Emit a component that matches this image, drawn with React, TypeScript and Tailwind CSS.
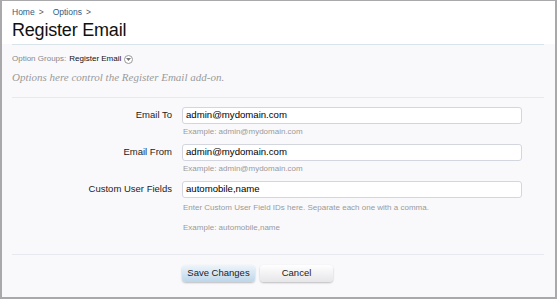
import React from "react";

const sans = { fontFamily: '"Liberation Sans", Arial, sans-serif' };

function Row({ label, value, children }: { label: string; value: string; children?: React.ReactNode }) {
  return (
    <div className="flex">
      <div className="w-[170px] shrink-0 h-[17px] flex items-center justify-end text-[9.5px] text-[#222]">{label}</div>
      <div className="ml-[10px] w-[340px]">
        <div className="h-[17px] bg-white border border-[#d3d6de] rounded-[3px] flex items-center pl-[3px] text-[9.6px] text-black">
          {value}
        </div>
        {children}
      </div>
    </div>
  );
}

export default function App() {
  return (
    <div className="w-[558px] h-[300px] bg-white" style={sans}>
      <div className="w-[557px] h-[299px] border-t border-r-2 border-b-2 border-l-2 border-[#a9a9ab] bg-[#f9f9fc] flex flex-col">
        <div className="bg-white h-[43px] px-[10px] flex flex-col">
          <div className="pt-[6px] h-[16px] flex items-center text-[8.5px] text-[#2d5d85]">
            <span>Home</span>
            <span className="ml-[4px] text-[#555]">&gt;</span>
            <span className="ml-[9px]">Options</span>
            <span className="ml-[4px] text-[#555]">&gt;</span>
          </div>
          <div className="text-[18px] leading-[22px] text-[#111] tracking-[-0.2px] mt-[2px]">Register Email</div>
        </div>
        <div className="mx-[10px] mr-[11px] h-[1px] bg-[#d8e4ea]" />
        <div className="px-[10px]">
          <div className="mt-[8px] h-[12px] flex items-center text-[8px]">
            <span className="text-[#888]">Option Groups:</span>
            <span className="ml-[3px] text-[#111]">Register Email</span>
            <span className="ml-[3px] w-[9px] h-[9px] rounded-full border border-[#999] bg-white flex items-center justify-center">
              <svg width="5" height="3" viewBox="0 0 5 3"><path d="M0 0 L5 0 L2.5 3 Z" fill="#777" /></svg>
            </span>
          </div>
          <div
            className="mt-[5px] h-[14px] flex items-center text-[11px] italic text-[#9a9a9a]"
            style={{ fontFamily: '"Liberation Serif", "Times New Roman", serif' }}
          >
            Options here control the Register Email add-on.
          </div>
        </div>
        <div className="mt-[13px] mx-[10px] mr-[11px] h-[1px] bg-[#e8e9ee]" />
        <div className="mt-[9px]">
          <Row label="Email To" value="admin@mydomain.com">
            <div className="mt-[3px] text-[8px] leading-[10px] text-[#9a9a9a] pl-[1px]">Example: admin@mydomain.com</div>
          </Row>
          <div className="mt-[7px]">
            <Row label="Email From" value="admin@mydomain.com">
              <div className="mt-[3px] text-[8px] leading-[10px] text-[#9a9a9a] pl-[1px]">Example: admin@mydomain.com</div>
            </Row>
          </div>
          <div className="mt-[7px]">
            <Row label="Custom User Fields" value="automobile,name">
              <div className="mt-[5px] text-[8px] leading-[10px] text-[#9a9a9a] pl-[1px]">
                Enter Custom User Field IDs here. Separate each one with a comma.
              </div>
              <div className="mt-[10px] text-[8px] leading-[10px] text-[#9a9a9a] pl-[1px]">Example: automobile,name</div>
            </Row>
          </div>
        </div>
        <div className="mt-[21px] mx-[10px] mr-[11px] h-[1px] bg-[#e8e9ee]" />
        <div className="mt-[10px] flex pl-[180px] gap-[5px]">
          <div className="w-[73px] h-[17px] rounded-[4px] bg-gradient-to-b from-[#eef5fb] to-[#bcd6ea] shadow-[0_1px_2px_rgba(0,0,0,0.25)] flex items-center justify-center text-[9.5px] text-[#222]">
            Save Changes
          </div>
          <div className="w-[73px] h-[17px] rounded-[4px] bg-gradient-to-b from-[#ffffff] to-[#e6e6ea] shadow-[0_1px_2px_rgba(0,0,0,0.25)] flex items-center justify-center text-[9.5px] text-[#222]">
            Cancel
          </div>
        </div>
      </div>
    </div>
  );
}
